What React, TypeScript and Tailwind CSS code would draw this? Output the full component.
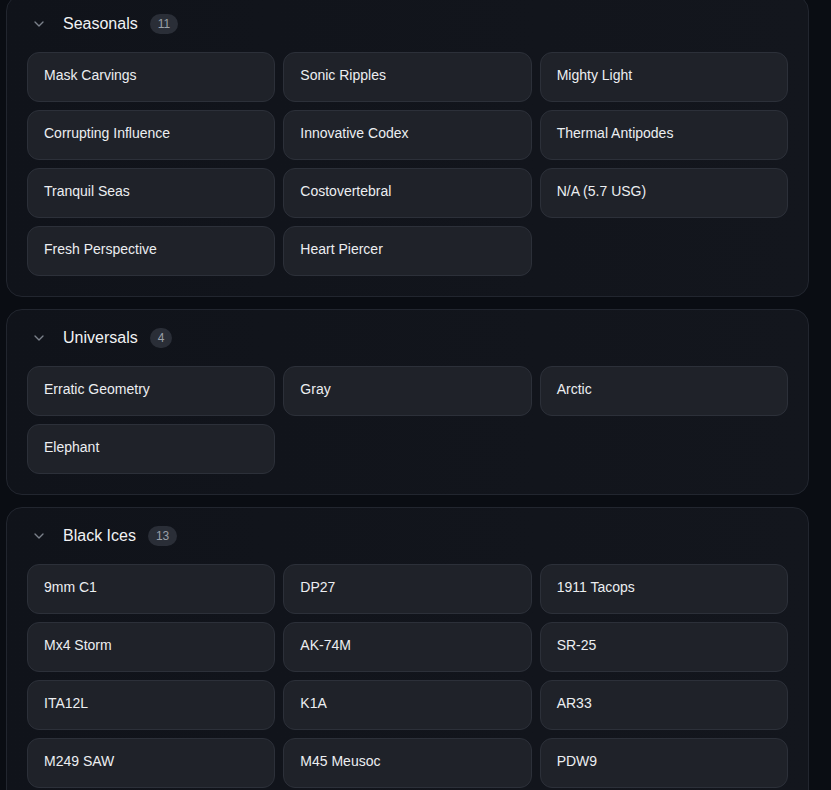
import React from 'react';
import { ChevronDown } from 'lucide-react';

type Group = {
  title: string;
  items: string[];
};

const groups: Group[] = [
  {
    title: 'Seasonals',
    items: [
      'Mask Carvings',
      'Sonic Ripples',
      'Mighty Light',
      'Corrupting Influence',
      'Innovative Codex',
      'Thermal Antipodes',
      'Tranquil Seas',
      'Costovertebral',
      'N/A (5.7 USG)',
      'Fresh Perspective',
      'Heart Piercer',
    ],
  },
  {
    title: 'Universals',
    items: ['Erratic Geometry', 'Gray', 'Arctic', 'Elephant'],
  },
  {
    title: 'Black Ices',
    items: [
      '9mm C1',
      'DP27',
      '1911 Tacops',
      'Mx4 Storm',
      'AK-74M',
      'SR-25',
      'ITA12L',
      'K1A',
      'AR33',
      'M249 SAW',
      'M45 Meusoc',
      'PDW9',
      'Commando 9',
    ],
  },
];

function SkinGroup({ group }: { group: Group }) {
  return (
    <section className="rounded-2xl border border-[#22262f] bg-gradient-to-r from-[#10131a] to-[#13161d] px-5 pt-[14px] pb-5">
      {/* header */}
      <div className="flex h-7 items-center pl-1">
        <ChevronDown className="h-4 w-4 text-[#7b818b]" strokeWidth={2} />
        <span className="ml-4 text-base text-[#f1f2f4]">{group.title}</span>
        <span className="ml-3 flex h-5 items-center rounded-full bg-[#2a2e37] px-2 text-xs text-[#9aa0a9]">
          {group.items.length}
        </span>
      </div>

      <div className="mt-[14px] grid grid-cols-3 gap-2">
        {group.items.map((item) => (
          <button
            key={item}
            className="flex h-[50px] items-center rounded-xl border border-[#2c3039] bg-[#1f2229] pb-1 pl-4 text-left text-sm text-[#eceef1]"
          >
            {item}
          </button>
        ))}
      </div>
    </section>
  );
}

export default function App() {
  return (
    <div
      className="h-screen overflow-hidden bg-[#0a0d13] pl-[6px] pr-[22px]"
      style={{ fontFamily: '"Liberation Sans", Arial, sans-serif' }}
    >
      <div className="-mt-[5px] flex flex-col gap-3">
        {groups.map((g) => (
          <SkinGroup key={g.title} group={g} />
        ))}
      </div>
    </div>
  );
}
